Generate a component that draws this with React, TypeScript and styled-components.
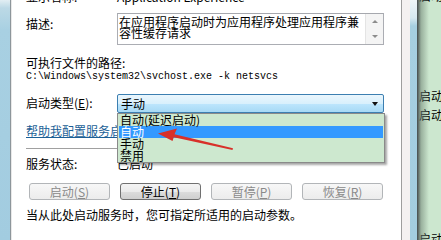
import React from "react";
import styled, { createGlobalStyle } from "styled-components";

const GlobalStyle = createGlobalStyle`
  html, body { margin: 0; padding: 0; }
  body {
    width: 441px;
    height: 240px;
    overflow: hidden;
    background: #fff;
    color: #000;
    font-family: "Noto Sans CJK SC", "Liberation Sans", sans-serif;
    font-size: 12px;
  }
`;

const Screen = styled.div`
  position: relative;
  display: flex;
  width: 441px;
  height: 240px;
  overflow: hidden;
`;

const LeftFrame = styled.div`
  flex: none;
  width: 10px;
  background: linear-gradient(#e2eef3 0, #bcd9e6 8px, #a8d0e2 30px, #a2cce0 100%);
`;

const Panel = styled.div`
  flex: none;
  display: flex;
  flex-direction: column;
  box-sizing: border-box;
  width: 392px;
  padding-left: 15px;
  background: #fff;
  border-left: 1px solid #8d969b;
  border-right: 1px solid #9e9e9e;
  box-shadow: inset 1px 0 0 #e8e8e8;
`;

const Row = styled.div<{ $top: number }>`
  display: flex;
  align-items: flex-start;
  margin-top: ${(p) => p.$top}px;
`;

const Label = styled.div<{ $pad?: number }>`
  flex: none;
  width: 91px;
  padding-top: ${(p) => p.$pad ?? 0}px;
  line-height: 14px;
  white-space: nowrap;
`;

const Plain = styled.div<{ $top: number }>`
  margin-top: ${(p) => p.$top}px;
  line-height: 14px;
  white-space: nowrap;
`;

const Value = styled.div`
  line-height: 14px;
  white-space: nowrap;
`;

const DescBox = styled.div`
  display: flex;
  box-sizing: border-box;
  width: 267px;
  height: 32px;
  border: 1px solid #abadb3;
  border-top-color: #a6a8ae;
  overflow: hidden;
`;

const DescText = styled.div`
  flex: 1;
  padding: 2px 0 0 1px;
  line-height: 11px;
  overflow: hidden;
`;

const ScrollBar = styled.div`
  flex: none;
  display: flex;
  flex-direction: column;
  width: 17px;
  background: #f4f4f4;
  border-left: 1px solid #e4e4e4;
`;

const ScrollButton = styled.div`
  flex: 1;
  display: flex;
  align-items: center;
  justify-content: center;
`;

const Tri = styled.span<{ $up?: boolean }>`
  width: 0;
  height: 0;
  border-left: 3px solid transparent;
  border-right: 3px solid transparent;
  ${(p) =>
    p.$up
      ? "border-bottom: 3px solid #8c8c8c;"
      : "border-top: 3px solid #8c8c8c;"}
`;

const PathText = styled.div`
  margin-top: 1px;
  font-family: "Liberation Mono", monospace;
  font-size: 10px;
  line-height: 12px;
  white-space: nowrap;
`;

const Combo = styled.div`
  position: relative;
  display: flex;
  align-items: center;
  box-sizing: border-box;
  width: 267px;
  height: 19px;
  padding-left: 3px;
  border: 1px solid #3c7fb1;
  border-radius: 2px;
  background: linear-gradient(#eaf6fd 0%, #d9f0fc 50%, #bee6fd 50%, #a7d9f5 100%);
  line-height: 14px;
`;

const ComboArrow = styled.span`
  margin-left: auto;
  margin-right: 5px;
  width: 0;
  height: 0;
  border-left: 3.5px solid transparent;
  border-right: 3.5px solid transparent;
  border-top: 4px solid #111;
`;

const DropList = styled.ul`
  position: absolute;
  top: 18px;
  left: -1px;
  z-index: 2;
  box-sizing: border-box;
  width: 268px;
  height: 50px;
  margin: 0;
  padding: 0;
  list-style: none;
  background: #cde8cf;
  border: 1px solid #8a8a8a;
  box-shadow: 2px 2px 2px rgba(0, 0, 0, 0.35);
`;

const DropItem = styled.li<{ $active?: boolean }>`
  height: 12px;
  margin: 0 1px;
  padding-left: 1px;
  line-height: 12px;
  white-space: nowrap;
  background: ${(p) => (p.$active ? "#3399ff" : "transparent")};
  color: ${(p) => (p.$active ? "#fff" : "#000")};
`;

const HelpLink = styled.a`
  margin-top: 11px;
  line-height: 14px;
  color: #1b5f96;
  text-decoration: underline;
  white-space: nowrap;
`;

const Separator = styled.div`
  margin-top: 10px;
  width: 358px;
  height: 1px;
  background: #a0a0a0;
`;

const ButtonRow = styled.div`
  display: flex;
  gap: 10px;
  margin-top: 12px;
  padding-left: 3px;
`;

const Button = styled.button<{ $disabled?: boolean }>`
  box-sizing: border-box;
  width: 81px;
  height: 17px;
  padding: 0;
  font: inherit;
  line-height: 14px;
  border-radius: 3px;
  border: 1px solid ${(p) => (p.$disabled ? "#b2b5b8" : "#707070")};
  color: ${(p) => (p.$disabled ? "#8a8a8a" : "#000")};
  background: ${(p) =>
    p.$disabled
      ? "linear-gradient(#f7f7f7, #ececec)"
      : "linear-gradient(#f4f4f4 0%, #ebebeb 50%, #dddddd 50%, #cfcfcf 100%)"};
`;

const RightStrip = styled.div<{ $w: number; $bg: string }>`
  flex: none;
  width: ${(p) => p.$w}px;
  background: ${(p) => p.$bg};
`;

const BgWindow = styled.div`
  position: relative;
  flex: 1;
  display: flex;
  flex-direction: column;
  padding-left: 2px;
  background: #cce7cf;
  &::before {
    content: "";
    position: absolute;
    top: 0;
    bottom: 0;
    left: 0;
    width: 12px;
    background: linear-gradient(to right, rgba(60, 66, 70, 0.95), rgba(110, 130, 115, 0.55) 4px, rgba(204, 231, 207, 0) 12px);
  }
`;

const BgRow = styled.div<{ $top: number }>`
  margin-top: ${(p) => p.$top}px;
  line-height: 14px;
  white-space: nowrap;
`;

const ArrowLayer = styled.svg`
  position: absolute;
  left: 150px;
  top: 120px;
  z-index: 3;
`;

export default function App() {
  return (
    <>
      <GlobalStyle />
      <Screen>
        <LeftFrame />
        <Panel>
          <Row $top={-10}>
            <Label>显示名称:</Label>
            <Value>Application Experience</Value>
          </Row>
          <Row $top={9}>
            <Label $pad={4}>描述:</Label>
            <DescBox>
              <DescText>在应用程序启动时为应用程序处理应用程序兼容性缓存请求</DescText>
              <ScrollBar>
                <ScrollButton>
                  <Tri $up />
                </ScrollButton>
                <ScrollButton>
                  <Tri />
                </ScrollButton>
              </ScrollBar>
            </DescBox>
          </Row>
          <Plain $top={11}>可执行文件的路径:</Plain>
          <PathText>C:\Windows\system32\svchost.exe -k netsvcs</PathText>
          <Row $top={11}>
            <Label $pad={2}>
              启动类型(<u>E</u>):
            </Label>
            <Combo>
              <span>手动</span>
              <ComboArrow />
              <DropList>
                <DropItem>自动(延迟启动)</DropItem>
                <DropItem $active>自动</DropItem>
                <DropItem>手动</DropItem>
                <DropItem>禁用</DropItem>
              </DropList>
            </Combo>
          </Row>
          <HelpLink>帮助我配置服务启动选项。</HelpLink>
          <Separator />
          <Row $top={8}>
            <Label>服务状态:</Label>
            <Value>已启动</Value>
          </Row>
          <ButtonRow>
            <Button $disabled>
              启动(<u>S</u>)
            </Button>
            <Button>
              停止(<u>T</u>)
            </Button>
            <Button $disabled>
              暂停(<u>P</u>)
            </Button>
            <Button $disabled>
              恢复(<u>R</u>)
            </Button>
          </ButtonRow>
          <Plain $top={8}>当从此处启动服务时，您可指定所适用的启动参数。</Plain>
        </Panel>
        <RightStrip $w={8} $bg="#f4f1f1" />
        <RightStrip $w={7} $bg="linear-gradient(#eef5f8 0, #d6e8f0 18px, #a6cfe1 26px, #a3cde0 100%)" />
        <BgWindow>
          <BgRow $top={-11}>启动</BgRow>
          <BgRow $top={86}>启动</BgRow>
          <BgRow $top={5}>启动</BgRow>
          <BgRow $top={110}>启动</BgRow>
        </BgWindow>
        <ArrowLayer width={90} height={35} viewBox="150 120 90 35">
          <polygon
            points="158,133.5 177,128.5 174.5,134.2 233,148.2 232.5,150 173.8,137.2 172.5,141"
            fill="#d8302a"
          />
        </ArrowLayer>
      </Screen>
    </>
  );
}
